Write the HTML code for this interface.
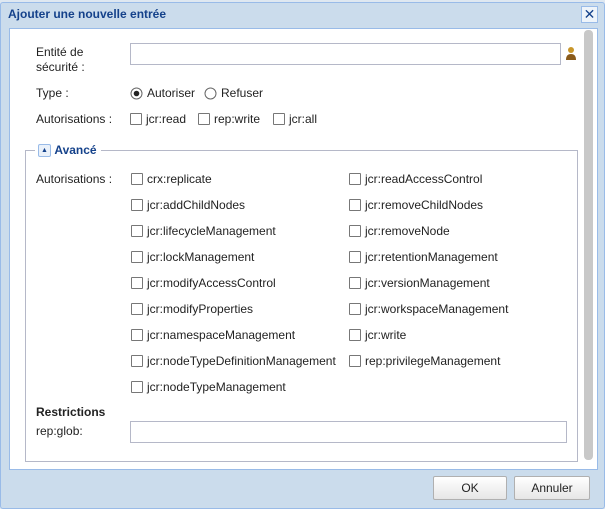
<!DOCTYPE html>
<html><head><style>
body{margin:0;width:605px;height:509px;background:#dfe8f1;font-family:"Liberation Sans",Tahoma,sans-serif;font-size:12px;color:#222;position:relative;overflow:hidden}
.win{position:absolute;left:0;top:2px;width:603px;height:505px;background:#cbdcec;border:1px solid #99bbe8;border-radius:3px}
.title{position:absolute;left:8px;top:7px;font-weight:bold;color:#15428b;font-size:12px}
.x{position:absolute;left:581px;top:6px;width:15px;height:15px;border:1px solid #99bbe8;background:#eef4fa;color:#15428b;font-size:14px;line-height:14px;text-align:center}
.panel{position:absolute;left:9px;top:28px;width:587px;height:440px;background:#fff;border:1px solid #99bbe8}
.sb{position:absolute;left:584px;top:30px;width:9px;height:430px;background:#c8c8c8;border-radius:4px}
.a{position:absolute;white-space:nowrap}
.inp{position:absolute;border:1px solid #b5b8c8;background:#fff}
.cb{position:absolute;width:10px;height:10px;border:1px solid #777;background:#fff;border-radius:1px}
.fs{position:absolute;left:25px;top:150px;width:551px;height:310px;border:1px solid #b5b8c8}
.btn{position:absolute;top:476px;height:22px;border:1px solid #b0b0b0;background:linear-gradient(#fff,#e6e6e6);text-align:center;line-height:22px;border-radius:2px}
</style></head><body>
<div class="win"></div>
<div class="title">Ajouter une nouvelle entrée</div>
<div class="x">✕</div>
<div class="panel"></div>
<div class="sb"></div>
<div class="a" style="left:36px;top:45px">Entité de</div>
<div class="a" style="left:36px;top:60px">sécurité :</div>
<div class="inp" style="left:130px;top:43px;width:429px;height:20px"></div>
<svg class="a" style="left:565px;top:45px" width="12" height="16" viewBox="0 0 12 16"><circle cx="6" cy="5" r="3" fill="#c8962a"/><path d="M1 15 Q1 9 6 9 Q11 9 11 15Z" fill="#8a5a1a"/></svg>
<div class="a" style="left:36px;top:86px">Type :</div>
<svg class="a" style="left:130px;top:87px" width="13" height="13"><circle cx="6.5" cy="6.5" r="5.5" fill="#fff" stroke="#666"/><circle cx="6.5" cy="6.5" r="2.8" fill="#222"/></svg>
<div class="a" style="left:147px;top:86px">Autoriser</div>
<svg class="a" style="left:204px;top:87px" width="13" height="13"><circle cx="6.5" cy="6.5" r="5.5" fill="#fff" stroke="#666"/></svg>
<div class="a" style="left:221px;top:86px">Refuser</div>
<div class="a" style="left:36px;top:112px">Autorisations :</div>
<div class="cb" style="left:130px;top:113px"></div><div class="a" style="left:146px;top:112px">jcr:read</div>
<div class="cb" style="left:198px;top:113px"></div><div class="a" style="left:214px;top:112px">rep:write</div>
<div class="cb" style="left:273px;top:113px"></div><div class="a" style="left:289px;top:112px">jcr:all</div>
<div class="fs"></div>
<div class="a" style="left:35px;top:143px;background:#fff;padding:0 4px 0 3px;height:14px"><span style="display:inline-block;width:11px;height:11px;border:1px solid #99bbe8;border-radius:2px;background:#eaf1fa;font-size:7px;color:#15428b;text-align:center;line-height:11px;vertical-align:middle">▲</span> <b style="color:#15428b">Avancé</b></div>
<div class="a" style="left:36px;top:172px">Autorisations :</div>
<div class="cb" style="left:131px;top:173px"></div><div class="a" style="left:147px;top:172px">crx:replicate</div>
<div class="cb" style="left:131px;top:199px"></div><div class="a" style="left:147px;top:198px">jcr:addChildNodes</div>
<div class="cb" style="left:131px;top:225px"></div><div class="a" style="left:147px;top:224px">jcr:lifecycleManagement</div>
<div class="cb" style="left:131px;top:251px"></div><div class="a" style="left:147px;top:250px">jcr:lockManagement</div>
<div class="cb" style="left:131px;top:277px"></div><div class="a" style="left:147px;top:276px">jcr:modifyAccessControl</div>
<div class="cb" style="left:131px;top:303px"></div><div class="a" style="left:147px;top:302px">jcr:modifyProperties</div>
<div class="cb" style="left:131px;top:329px"></div><div class="a" style="left:147px;top:328px">jcr:namespaceManagement</div>
<div class="cb" style="left:131px;top:355px"></div><div class="a" style="left:147px;top:354px">jcr:nodeTypeDefinitionManagement</div>
<div class="cb" style="left:131px;top:381px"></div><div class="a" style="left:147px;top:380px">jcr:nodeTypeManagement</div>
<div class="cb" style="left:349px;top:173px"></div><div class="a" style="left:365px;top:172px">jcr:readAccessControl</div>
<div class="cb" style="left:349px;top:199px"></div><div class="a" style="left:365px;top:198px">jcr:removeChildNodes</div>
<div class="cb" style="left:349px;top:225px"></div><div class="a" style="left:365px;top:224px">jcr:removeNode</div>
<div class="cb" style="left:349px;top:251px"></div><div class="a" style="left:365px;top:250px">jcr:retentionManagement</div>
<div class="cb" style="left:349px;top:277px"></div><div class="a" style="left:365px;top:276px">jcr:versionManagement</div>
<div class="cb" style="left:349px;top:303px"></div><div class="a" style="left:365px;top:302px">jcr:workspaceManagement</div>
<div class="cb" style="left:349px;top:329px"></div><div class="a" style="left:365px;top:328px">jcr:write</div>
<div class="cb" style="left:349px;top:355px"></div><div class="a" style="left:365px;top:354px">rep:privilegeManagement</div>
<div class="a" style="left:36px;top:405px;font-weight:bold">Restrictions</div>
<div class="a" style="left:36px;top:424px">rep:glob:</div>
<div class="inp" style="left:130px;top:421px;width:435px;height:20px"></div>
<div class="btn" style="left:433px;width:72px">OK</div>
<div class="btn" style="left:514px;width:74px">Annuler</div>
</body></html>
